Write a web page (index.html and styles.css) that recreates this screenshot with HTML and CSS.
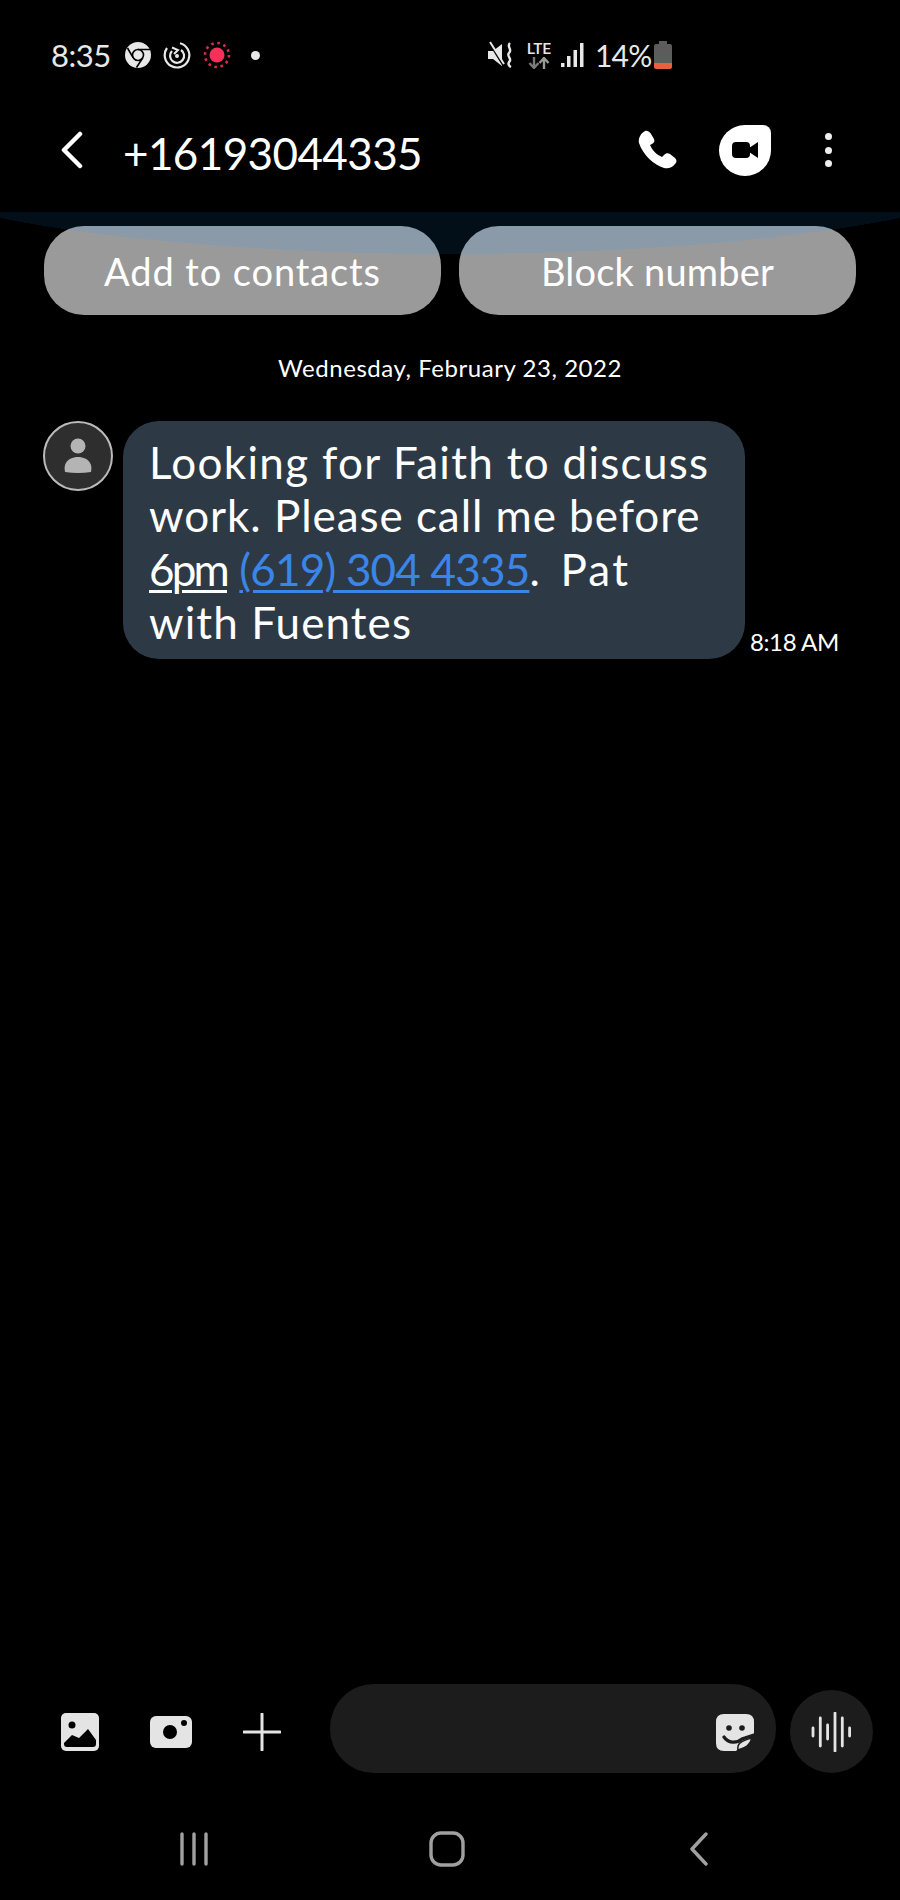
FILE: index.html
```html
<!DOCTYPE html>
<html lang="en">

<head>
    <meta charset="UTF-8">
    <meta name="viewport" content="width=device-width, initial-scale=1.0">
    <title>Messages</title>
    <link rel="stylesheet" href="styles.css">
</head>

<body>
    <div id="phone">
        <!-- status bar -->
        <div class="status">
            <div class="status-left">
                <span class="status-time">8:35</span>
                <svg class="ic-chrome" viewBox="0 0 26 26" width="26" height="26">
                    <circle cx="13" cy="13" r="13" fill="#e8e8e8" />
                    <circle cx="13" cy="13" r="5.5" fill="#e8e8e8" stroke="#000" stroke-width="1.6" />
                    <path d="M13 7.5H25M8.2 15.8L2.5 6M17.8 15.8L11.5 25.5" stroke="#000" stroke-width="1.6" fill="none" />
                </svg>
                <svg class="ic-sync" viewBox="0 0 28 28" width="28" height="28">
                    <path d="M17 2.2A12.3 12.3 0 1 1 4 7" fill="none" stroke="#e8e8e8" stroke-width="2.2" />
                    <path d="M18 9A7 7 0 1 1 9 10" fill="none" stroke="#e8e8e8" stroke-width="2.2" />
                    <path d="M9 6.5L15 9L11 13" fill="none" stroke="#e8e8e8" stroke-width="2" />
                    <circle cx="14" cy="15" r="2" fill="#e8e8e8" />
                </svg>
                <svg class="ic-rec" viewBox="0 0 28 28" width="28" height="28">
                    <circle cx="14" cy="14" r="7.5" fill="#f8305a" />
                    <circle cx="14" cy="14" r="12" fill="none" stroke="#d82a50" stroke-width="2.6" stroke-dasharray="2.6 3.68" />
                </svg>
                <span class="status-dot"></span>
            </div>
            <div class="status-right">
                <svg class="ic-mute" viewBox="0 0 28 28" width="28" height="28">
                    <path d="M1 10H6L15 3V25L6 18H1Z" fill="#e8e8e8" />
                    <path d="M3 3L16 24" stroke="#000" stroke-width="2" />
                    <path d="M3 1L17 23" stroke="#e8e8e8" stroke-width="2" />
                    <path d="M23 2C19 6 26 8 22 12C19 15 26 18 22 21C21 23 22 25 24 26" fill="none" stroke="#e8e8e8" stroke-width="2.4" />
                </svg>
                <div class="lte">
                    <span class="lte-label">LTE</span>
                    <svg viewBox="0 0 22 12" width="22" height="12">
                        <path d="M6 0V10M1.500 6L6 11L10.500 6" fill="none" stroke="#7a7a7a" stroke-width="2.400" />
                        <path d="M16 12V2M11.500 6L16 1L20.500 6" fill="none" stroke="#9a9a9a" stroke-width="2.400" />
                    </svg>
                </div>
                <svg class="ic-signal" viewBox="0 0 24 26" width="24" height="26">
                    <rect x="0" y="21" width="3.500" height="4" fill="#e8e8e8" />
                    <rect x="6" y="14" width="3.500" height="11" fill="#e8e8e8" />
                    <rect x="12.500" y="8" width="3.500" height="17" fill="#e8e8e8" />
                    <rect x="19" y="1" width="3.500" height="24" fill="#e8e8e8" />
                </svg>
                <span class="status-pct">14%</span>
                <svg class="ic-batt" viewBox="0 0 18 28" width="18" height="28">
                    <path d="M5 0H13V3H16Q18 3 18 5V23H0V5Q0 3 2 3H5Z" fill="#5c5c5c" />
                    <path d="M0 22H18V26Q18 28 16 28H2Q0 28 0 26Z" fill="#e8603c" />
                </svg>
            </div>
        </div>

        <!-- title bar -->
        <div class="topbar">
            <svg class="ic-back" viewBox="0 0 24 38" width="24" height="38">
                <path d="M20 3L4 19L20 35" fill="none" stroke="#fff" stroke-width="4.500" stroke-linecap="round" stroke-linejoin="round" />
            </svg>
            <span class="number">+16193044335</span>
            <div class="top-actions">
                <svg viewBox="0 0 40 40" width="40" height="40">
                    <path d="M8 1C10 0 13 2 14 4L17 9C18 11 17 13 15 14L13 15C15 20 20 25 25 27L27 25C29 23 31 23 33 24L38 28C40 30 40 32 38 34C35 38 31 39 27 38C17 35 6 25 2 13C1 8 4 3 8 1Z" fill="#fff" />
                </svg>
                <div class="video-btn">
                    <svg viewBox="0 0 26 16" width="26" height="16">
                        <rect x="0" y="0" width="18" height="16" rx="4" fill="#000" />
                        <path d="M17 6L26 0V16L17 10Z" fill="#000" />
                    </svg>
                </div>
                <div class="kebab"><span></span><span></span><span></span></div>
            </div>
        </div>

        <!-- glow strip and suggestion buttons -->
        <div class="banner">
            <div class="chip chip-left">Add to contacts</div>
            <div class="chip chip-right">Block number</div>
        </div>

        <div class="date">Wednesday, February 23, 2022</div>

        <!-- message -->
        <div class="message">
            <div class="avatar">
                <svg viewBox="0 0 30 38" width="30" height="38">
                    <circle cx="15" cy="9" r="7.500" fill="#b4b4b4" />
                    <path d="M2 35Q1 31 2 28C4 22 10 20 15 20C20 20 26 22 28 28Q29 31 28 35Q15 37 2 35Z" fill="#b4b4b4" />
                </svg>
            </div>
            <div class="bubble"><span class="line-wide">Looking for Faith to discuss</span><br><span class="line-tight">work. Please call me before</span><br><span class="u">6pm</span> <span class="link">(619) 304 4335</span><span class="tail">. Pat</span><br>with Fuentes</div>
            <span class="msg-time">8:18 AM</span>
        </div>

        <div class="spacer"></div>

        <!-- composer -->
        <div class="composer">
            <div class="tools">
                <svg viewBox="0 0 38 38" width="38" height="38">
                    <rect width="38" height="38" rx="5" fill="#e4e4e4" />
                    <circle cx="11" cy="12" r="3.500" fill="#000" />
                    <path d="M3 30L11 22L18 25L27 16L35 27V31Q35 34 32 34H6Q3 34 3 31Z" fill="#000" />
                </svg>
                <svg viewBox="0 0 42 32" width="42" height="32">
                    <rect width="42" height="32" rx="6" fill="#e4e4e4" />
                    <circle cx="20" cy="16" r="7" fill="#000" />
                    <circle cx="34" cy="7" r="3" fill="#000" />
                </svg>
                <svg viewBox="0 0 38 38" width="38" height="38">
                    <path d="M19 1V37M1 19H37" stroke="#e4e4e4" stroke-width="3" stroke-linecap="round" />
                </svg>
            </div>
            <div class="input">
                <svg viewBox="0 0 38 38" width="38" height="38">
                    <path d="M8 0H30Q38 0 38 8V20L20 37H8Q0 37 0 29V8Q0 0 8 0Z" fill="#e4e4e4" />
                    <circle cx="13" cy="14" r="2.800" fill="#1c1c1c" />
                    <circle cx="26" cy="14" r="2.800" fill="#1c1c1c" />
                    <path d="M8 23C12 29 20 30 26 25L38 21" fill="none" stroke="#1c1c1c" stroke-width="3.200" stroke-linecap="round" />
                    <path d="M22 36C21 30 24 27 36 24C34 31 30 34 22 36Z" fill="#e4e4e4" stroke="#1c1c1c" stroke-width="1.500" />
                </svg>
            </div>
            <div class="voice">
                <svg viewBox="0 0 42 40" width="42" height="40">
                    <path d="M2 16V24M9.300 6V34M16.600 13V27M24 1V39M31.300 6V34M38.600 16V24" stroke="#e4e4e4" stroke-width="2.800" stroke-linecap="round" />
                </svg>
            </div>
        </div>

        <!-- nav bar -->
        <div class="navbar">
            <svg viewBox="0 0 30 34" width="30" height="34">
                <path d="M3 2V32M15 2V32M27 2V32" stroke="#a0a0a0" stroke-width="3.400" stroke-linecap="round" />
            </svg>
            <svg class="nav-home" viewBox="0 0 36 36" width="36" height="36">
                <rect x="2" y="2" width="32" height="32" rx="10" fill="none" stroke="#a0a0a0" stroke-width="3.400" />
            </svg>
            <svg class="nav-back" viewBox="0 0 20 34" width="20" height="34">
                <path d="M17 2L3 17L17 32" fill="none" stroke="#a0a0a0" stroke-width="3.400" stroke-linecap="round" stroke-linejoin="round" />
            </svg>
        </div>
    </div>
</body>

</html>
```
FILE: styles.css
```css
* {
    margin: 0;
    padding: 0;
    box-sizing: border-box;
}

body {
    background-color: #000;
    font-family: "Lato", "Noto Sans", sans-serif;
    color: #fff;
}

#phone {
    width: 900px;
    height: 1900px;
    display: flex;
    flex-direction: column;
    overflow: hidden;
}

/* status bar */
.status {
    height: 56px;
    margin-top: 27px;
    display: flex;
    align-items: center;
    padding-left: 51px;
}

.status-left {
    width: 436px;
    display: flex;
    align-items: center;
}

.status-time {
    font-size: 31px;
    letter-spacing: -.5px;
    color: #e8e8e8;
    width: 74px;
}

.ic-sync {
    margin-left: 12px;
}

.ic-rec {
    margin-left: 12px;
}

.status-dot {
    width: 9px;
    height: 9px;
    border-radius: 50%;
    background-color: #e8e8e8;
    margin-left: 20px;
}

.status-right {
    display: flex;
    align-items: center;
    color: #e8e8e8;
}

.lte {
    display: flex;
    flex-direction: column;
    align-items: center;
    margin-left: 11px;
    width: 26px;
}

.lte-label {
    font-family: "Roboto", sans-serif;
    font-size: 15px;
    font-weight: 500;
    line-height: 15px;
}

.ic-signal {
    margin-left: 9px;
}

.status-pct {
    font-size: 30px;
    letter-spacing: -.8px;
    margin-left: 10px;
    width: 59px;
}

/* title bar */
.topbar {
    height: 80px;
    margin-top: 27px;
    display: flex;
    align-items: center;
    padding-left: 60px;
}

.number {
    font-size: 44px;
    letter-spacing: -.6px;
    margin-left: 39px;
    padding-top: 6px;
    width: 514px;
}

.top-actions {
    display: flex;
    align-items: center;
}

.video-btn {
    width: 52px;
    height: 51px;
    margin-left: 42px;
    background-color: #fff;
    border-radius: 50% 8px 50% 50%;
    display: flex;
    align-items: center;
    justify-content: center;
}

.kebab {
    margin-left: 54px;
    display: flex;
    flex-direction: column;
    gap: 6.500px;
}

.kebab span {
    width: 7px;
    height: 7px;
    border-radius: 50%;
    background-color: #eee;
}

/* glow strip and suggestion buttons */
.banner {
    margin-top: 22px;
    height: 103px;
    padding: 14px 44px 0;
    display: flex;
    gap: 18px;
    background: radial-gradient(600px 106px at 450px -64px, #020e18 99.8%, #000 100%) no-repeat;
    background-size: 100% 42px;
}

.chip {
    width: 397px;
    height: 89px;
    border-radius: 40px;
    display: flex;
    align-items: center;
    justify-content: center;
    font-size: 38px;
}

.chip-left {
    letter-spacing: .9px;
    background: radial-gradient(600px 106px at 406px -78px, #8a9aa8 99.8%, #9a9a9a 100%);
}

.chip-right {
    letter-spacing: .2px;
    background: radial-gradient(600px 106px at -9px -78px, #8a9aa8 99.8%, #9a9a9a 100%);
}

.date {
    margin-top: 37px;
    text-align: center;
    font-size: 24px;
    letter-spacing: .55px;
    line-height: 32px;
}

/* message */
.message {
    margin-top: 37px;
    padding-left: 43px;
    display: flex;
    align-items: flex-start;
}

.avatar {
    width: 70px;
    height: 70px;
    border-radius: 50%;
    background-color: #2e2e2e;
    border: 2px solid #bbb;
    display: flex;
    align-items: center;
    justify-content: center;
}

.bubble {
    width: 622px;
    height: 238px;
    margin-left: 10px;
    padding: 15px 26px 0;
    background-color: #2d3a46;
    border-radius: 36px;
    font-size: 44px;
    letter-spacing: 1.100px;
    line-height: 53.300px;
    white-space: nowrap;
}

.line-wide {
    letter-spacing: 1.300px;
}

.line-tight {
    letter-spacing: .95px;
}

.u {
    letter-spacing: -2.800px;
    text-decoration: underline;
    text-decoration-thickness: 2.500px;
    text-underline-offset: 4px;
}

.link {
    color: #3a86e8;
    letter-spacing: -.8px;
    text-decoration: underline;
    text-decoration-thickness: 2.500px;
    text-underline-offset: 4px;
}

.tail {
    letter-spacing: 2.200px;
    word-spacing: 5px;
}

.msg-time {
    align-self: flex-end;
    margin-left: 5px;
    font-size: 24px;
    letter-spacing: -.4px;
    line-height: 34px;
}

.spacer {
    flex: 1;
}

/* composer */
.composer {
    height: 89px;
    display: flex;
    align-items: flex-end;
    padding-left: 61px;
}

.tools {
    height: 83px;
    display: flex;
    align-items: center;
    gap: 51px;
    width: 269px;
}

.input {
    width: 446px;
    height: 89px;
    border-radius: 44px;
    background-color: #1c1c1c;
    display: flex;
    align-items: center;
    justify-content: flex-end;
    padding-right: 22px;
    padding-top: 8px;
}

.voice {
    width: 83px;
    height: 83px;
    margin-left: 14px;
    border-radius: 50%;
    background-color: #1c1c1c;
    display: flex;
    align-items: center;
    justify-content: center;
}

/* nav bar */
.navbar {
    height: 100px;
    margin-top: 26px;
    margin-bottom: 1px;
    display: flex;
    align-items: center;
    padding-left: 179px;
}

.nav-home {
    margin-left: 220px;
}

.nav-back {
    margin-left: 224px;
}
```
